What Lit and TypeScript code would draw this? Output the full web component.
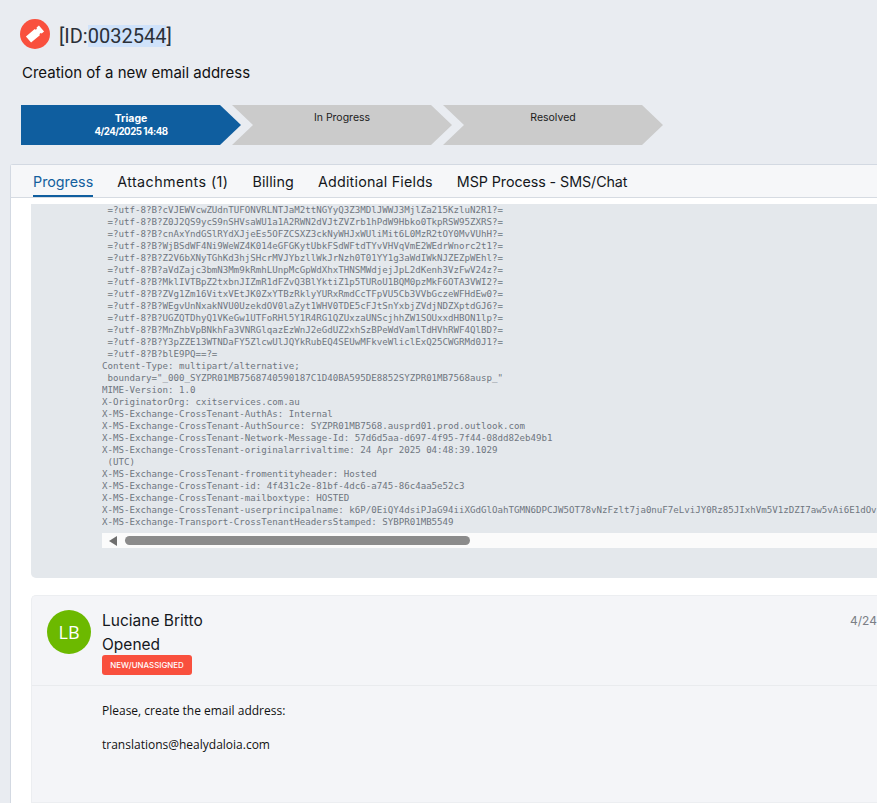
import { LitElement, html, css } from "lit";
import { customElement } from "lit/decorators.js";

const HEADERS = [
  " =?utf-8?B?cVJEWVcwZUdnTUFONVRLNTJaM2ttNGYyQ3Z3MDlJWWJ3MjlZa215KzluN2R1?=",
  " =?utf-8?B?Z0J2QS9ycS9nSHVsaWU1a1A2RWN2dVJtZVZrb1hPdW9Hbko0TkpRSW95ZXRS?=",
  " =?utf-8?B?cnAxYndGSlRYdXJjeEs5OFZCSXZ3ckNyWHJxWUliMit6L0MzR2tOY0MvVUhH?=",
  " =?utf-8?B?WjBSdWF4Ni9WeWZ4K014eGFGKytUbkFSdWFtdTYvVHVqVmE2WEdrWnorc2t1?=",
  " =?utf-8?B?Z2V6bXNyTGhKd3hjSHcrMVJYbzllWkJrNzh0T01YY1g3aWdIWkNJZEZpWEhl?=",
  " =?utf-8?B?aVdZajc3bmN3Mm9kRmhLUnpMcGpWdXhxTHNSMWdjejJpL2dKenh3VzFwV24z?=",
  " =?utf-8?B?MklIVTBpZ2txbnJIZmR1dFZvQ3BlYktiZ1p5TURoU1BQM0pzMkF6OTA3VWI2?=",
  " =?utf-8?B?ZVg1Zm16VitxVEtJK0ZxYTBzRklyYURxRmdCcTFpVU5Cb3VVbGczeWFHdEw0?=",
  " =?utf-8?B?WEgvUnNxakNVU0UzekdOV0laZyt1WHV0TDE5cFJtSnYxbjZVdjNDZXptdGJ6?=",
  " =?utf-8?B?UGZQTDhyQ1VKeGw1UTFoRHl5Y1R4RG1QZUxzaUNScjhhZW1SOUxxdHBON1lp?=",
  " =?utf-8?B?MnZhbVpBNkhFa3VNRGlqazEzWnJ2eGdUZ2xhSzBPeWdVamlTdHVhRWF4QlBD?=",
  " =?utf-8?B?Y3pZZE13WTNDaFY5ZlcwUlJQYkRubEQ4SEUwMFkveWliclExQ25CWGRMd0J1?=",
  " =?utf-8?B?blE9PQ==?=",
  "Content-Type: multipart/alternative;",
  ' boundary="_000_SYZPR01MB7568740590187C1D40BA595DE8852SYZPR01MB7568ausp_"',
  "MIME-Version: 1.0",
  "X-OriginatorOrg: cxitservices.com.au",
  "X-MS-Exchange-CrossTenant-AuthAs: Internal",
  "X-MS-Exchange-CrossTenant-AuthSource: SYZPR01MB7568.ausprd01.prod.outlook.com",
  "X-MS-Exchange-CrossTenant-Network-Message-Id: 57d6d5aa-d697-4f95-7f44-08dd82eb49b1",
  "X-MS-Exchange-CrossTenant-originalarrivaltime: 24 Apr 2025 04:48:39.1029",
  " (UTC)",
  "X-MS-Exchange-CrossTenant-fromentityheader: Hosted",
  "X-MS-Exchange-CrossTenant-id: 4f431c2e-81bf-4dc6-a745-86c4aa5e52c3",
  "X-MS-Exchange-CrossTenant-mailboxtype: HOSTED",
  "X-MS-Exchange-CrossTenant-userprincipalname: k6P/0EiQY4dsiPJaG94iiXGdGlOahTGMN6DPCJW5OT78vNzFzlt7ja0nuF7eLviJY0Rz85JIxhVm5V1zDZI7aw5vAi6E1dOv",
  "X-MS-Exchange-Transport-CrossTenantHeadersStamped: SYBPR01MB5549",
].join("\n");

const TABS = [
  { label: "Progress", spacing: 0 },
  { label: "Attachments (1)", spacing: 0.42 },
  { label: "Billing", spacing: 0.15 },
  { label: "Additional Fields", spacing: 0.2 },
  { label: "MSP Process - SMS/Chat", spacing: -0.08 },
];

@customElement("app-root")
export class AppRoot extends LitElement {
  static styles = css`
    :host {
      display: block;
      width: 877px;
      height: 803px;
      overflow: hidden;
      background: #e9ecf1;
      font-family: Inter, "Liberation Sans", sans-serif;
      color: #14171c;
    }
    .page { display: flex; flex-direction: column; height: 803px; padding-top: 19px; box-sizing: border-box; }
    .title { display: flex; align-items: flex-start; gap: 9px; padding-left: 20px; height: 30px; }
    .ticket { width: 30px; height: 30px; flex: none; display: block; }
    .id {
      font-family: Roboto, "Liberation Sans", sans-serif; font-size: 20px; line-height: 22px;
      margin-top: 6px; color: #2b3038; white-space: pre;
    }
    .sel { display: inline-block; background: #cfe2fa; height: 22px; }
    .subject { margin: 14px 0 0 22px; font-size: 15px; line-height: 20px; color: #111; }
    .steps { display: flex; margin: 22px 0 0 21px; height: 40px; }
    .step {
      width: 220px; height: 40px; margin-right: -9px; flex: none;
      background: #cbcbcb; box-sizing: border-box; padding-top: 6px;
      clip-path: polygon(0 0, 199px 0, 220px 50%, 199px 100%, 0 100%, 21px 50%);
      text-align: center; font-size: 10.5px; line-height: 14px; color: #1c1c1c;
    }
    .step.active {
      background: #0f5e9f; color: #fff; font-weight: 700; padding-top: 7px; line-height: 13px;
      clip-path: polygon(0 0, 199px 0, 220px 50%, 199px 100%, 0 100%);
    }
    .when { font-size: 9.7px; letter-spacing: -0.5px; }
    .panel {
      margin: 19px 0 0 10px; flex: 1; min-height: 0; background: #fff;
      border: 1px solid #d3d9e2; border-right: 0; border-bottom: 0;
      border-radius: 3px 0 0 0; display: flex; flex-direction: column;
    }
    .tabs {
      display: flex; gap: 24px; padding-left: 22px; height: 32px; flex: none;
      background: #f6f7f9; border-bottom: 1px solid #d6dbe2;
    }
    .tab { font-size: 14.3px; line-height: 34px; height: 32px; box-sizing: border-box; white-space: nowrap; color: #14171c; }
    .tab.on { color: #135f9e; border-bottom: 2px solid #0f5e9f; }
    .body { flex: 1; min-height: 0; overflow: hidden; padding: 6px 0 0 20px; display: flex; flex-direction: column; gap: 17px; }
    .raw {
      flex: none; height: 374px; box-sizing: border-box; background: #e4e8ec;
      border-radius: 0 0 0 5px; padding-left: 71px; min-width: 0;
    }
    pre {
      margin: 0; font-family: "DejaVu Sans Mono", "Liberation Mono", monospace;
      font-size: 9.13px; line-height: 12px; color: #6f7680; height: 323px; white-space: pre;
      overflow: hidden;
    }
    .scroll { height: 15px; margin-top: 6px; background: #fbfbfb; display: flex; align-items: center; }
    .arrow { width: 0; height: 0; margin-left: 7px; border: 5px solid transparent; border-left: 0; border-right: 8px solid #6e6e6e; }
    .thumb { width: 345px; height: 9px; margin-left: 8px; border-radius: 5px; background: #8b8b8b; }
    .msg {
      flex: 1; background: #f4f5f8; border: 1px solid #eceef1; border-right: 0;
      border-radius: 5px 0 0 0; box-sizing: border-box; min-height: 208px; min-width: 0;
    }
    .msg-head { display: flex; height: 90px; box-sizing: border-box; border-bottom: 1px solid #e9ebee; padding: 14px 0 0 15px; position: relative; }
    .avatar {
      width: 44px; height: 44px; border-radius: 50%; background: #6cb900; color: #fff; flex: none;
      display: flex; align-items: center; justify-content: center; font-size: 18px; margin-right: 11px;
      font-family: "Open Sans", sans-serif;
    }
    .who { display: flex; flex-direction: column; align-items: flex-start; }
    .name { font-size: 15.5px; line-height: 22px; color: #14171c; }
    .state { font-size: 15.5px; line-height: 24px; padding-top: 1px; color: #14171c; }
    .badge {
      background: #f9503e; color: #fff; border-radius: 3px; height: 20px; width: 90px;
      display: flex; align-items: center; justify-content: center;
      font-size: 7.9px; font-weight: 500; margin-top: -2px; white-space: nowrap;
    }
    .date { position: absolute; left: 818px; top: 16px; font-size: 12px; line-height: 18px; color: #7b7f86; white-space: nowrap; }
    .text { padding: 16px 0 0 70px; font-family: "Open Sans", sans-serif; font-size: 12px; line-height: 17px; color: #111; }
    .text p { margin: 0 0 17px; }
  `;

  render() {
    return html`
      <div class="page">
        <div class="title">
          <svg class="ticket" viewBox="0 0 30 30">
            <circle cx="15" cy="15" r="15" fill="#f9503e"></circle>
            <path fill="#fff" transform="rotate(-40 15 15)"
              d="M6.5 11H18a1.2 1.2 0 0 0 2.4 0H23.5V19H20.4a1.2 1.2 0 0 0-2.4 0H6.5z"></path>
          </svg>
          <div class="id">[ID:<span class="sel">0032544</span>]</div>
        </div>
        <div class="subject">Creation of a new email address</div>
        <div class="steps">
          <div class="step active"><div>Triage</div><div class="when">4/24/2025 14:48</div></div>
          <div class="step"><div>In Progress</div></div>
          <div class="step"><div>Resolved</div></div>
        </div>
        <div class="panel">
          <div class="tabs">
            ${TABS.map(
              (t, i) => html`<div class="tab ${i === 0 ? "on" : ""}" style="letter-spacing:${t.spacing}px">${t.label}</div>`
            )}
          </div>
          <div class="body">
            <div class="raw">
              <pre>${HEADERS}</pre>
              <div class="scroll"><div class="arrow"></div><div class="thumb"></div></div>
            </div>
            <div class="msg">
              <div class="msg-head">
                <div class="avatar">LB</div>
                <div class="who">
                  <div class="name">Luciane Britto</div>
                  <div class="state">Opened</div>
                  <div class="badge">NEW/UNASSIGNED</div>
                </div>
                <div class="date">4/24/2025 14:48</div>
              </div>
              <div class="text">
                <p>Please, create the email address:</p>
                <p>translations@healydaloia.com</p>
              </div>
            </div>
          </div>
        </div>
      </div>
    `;
  }
}
